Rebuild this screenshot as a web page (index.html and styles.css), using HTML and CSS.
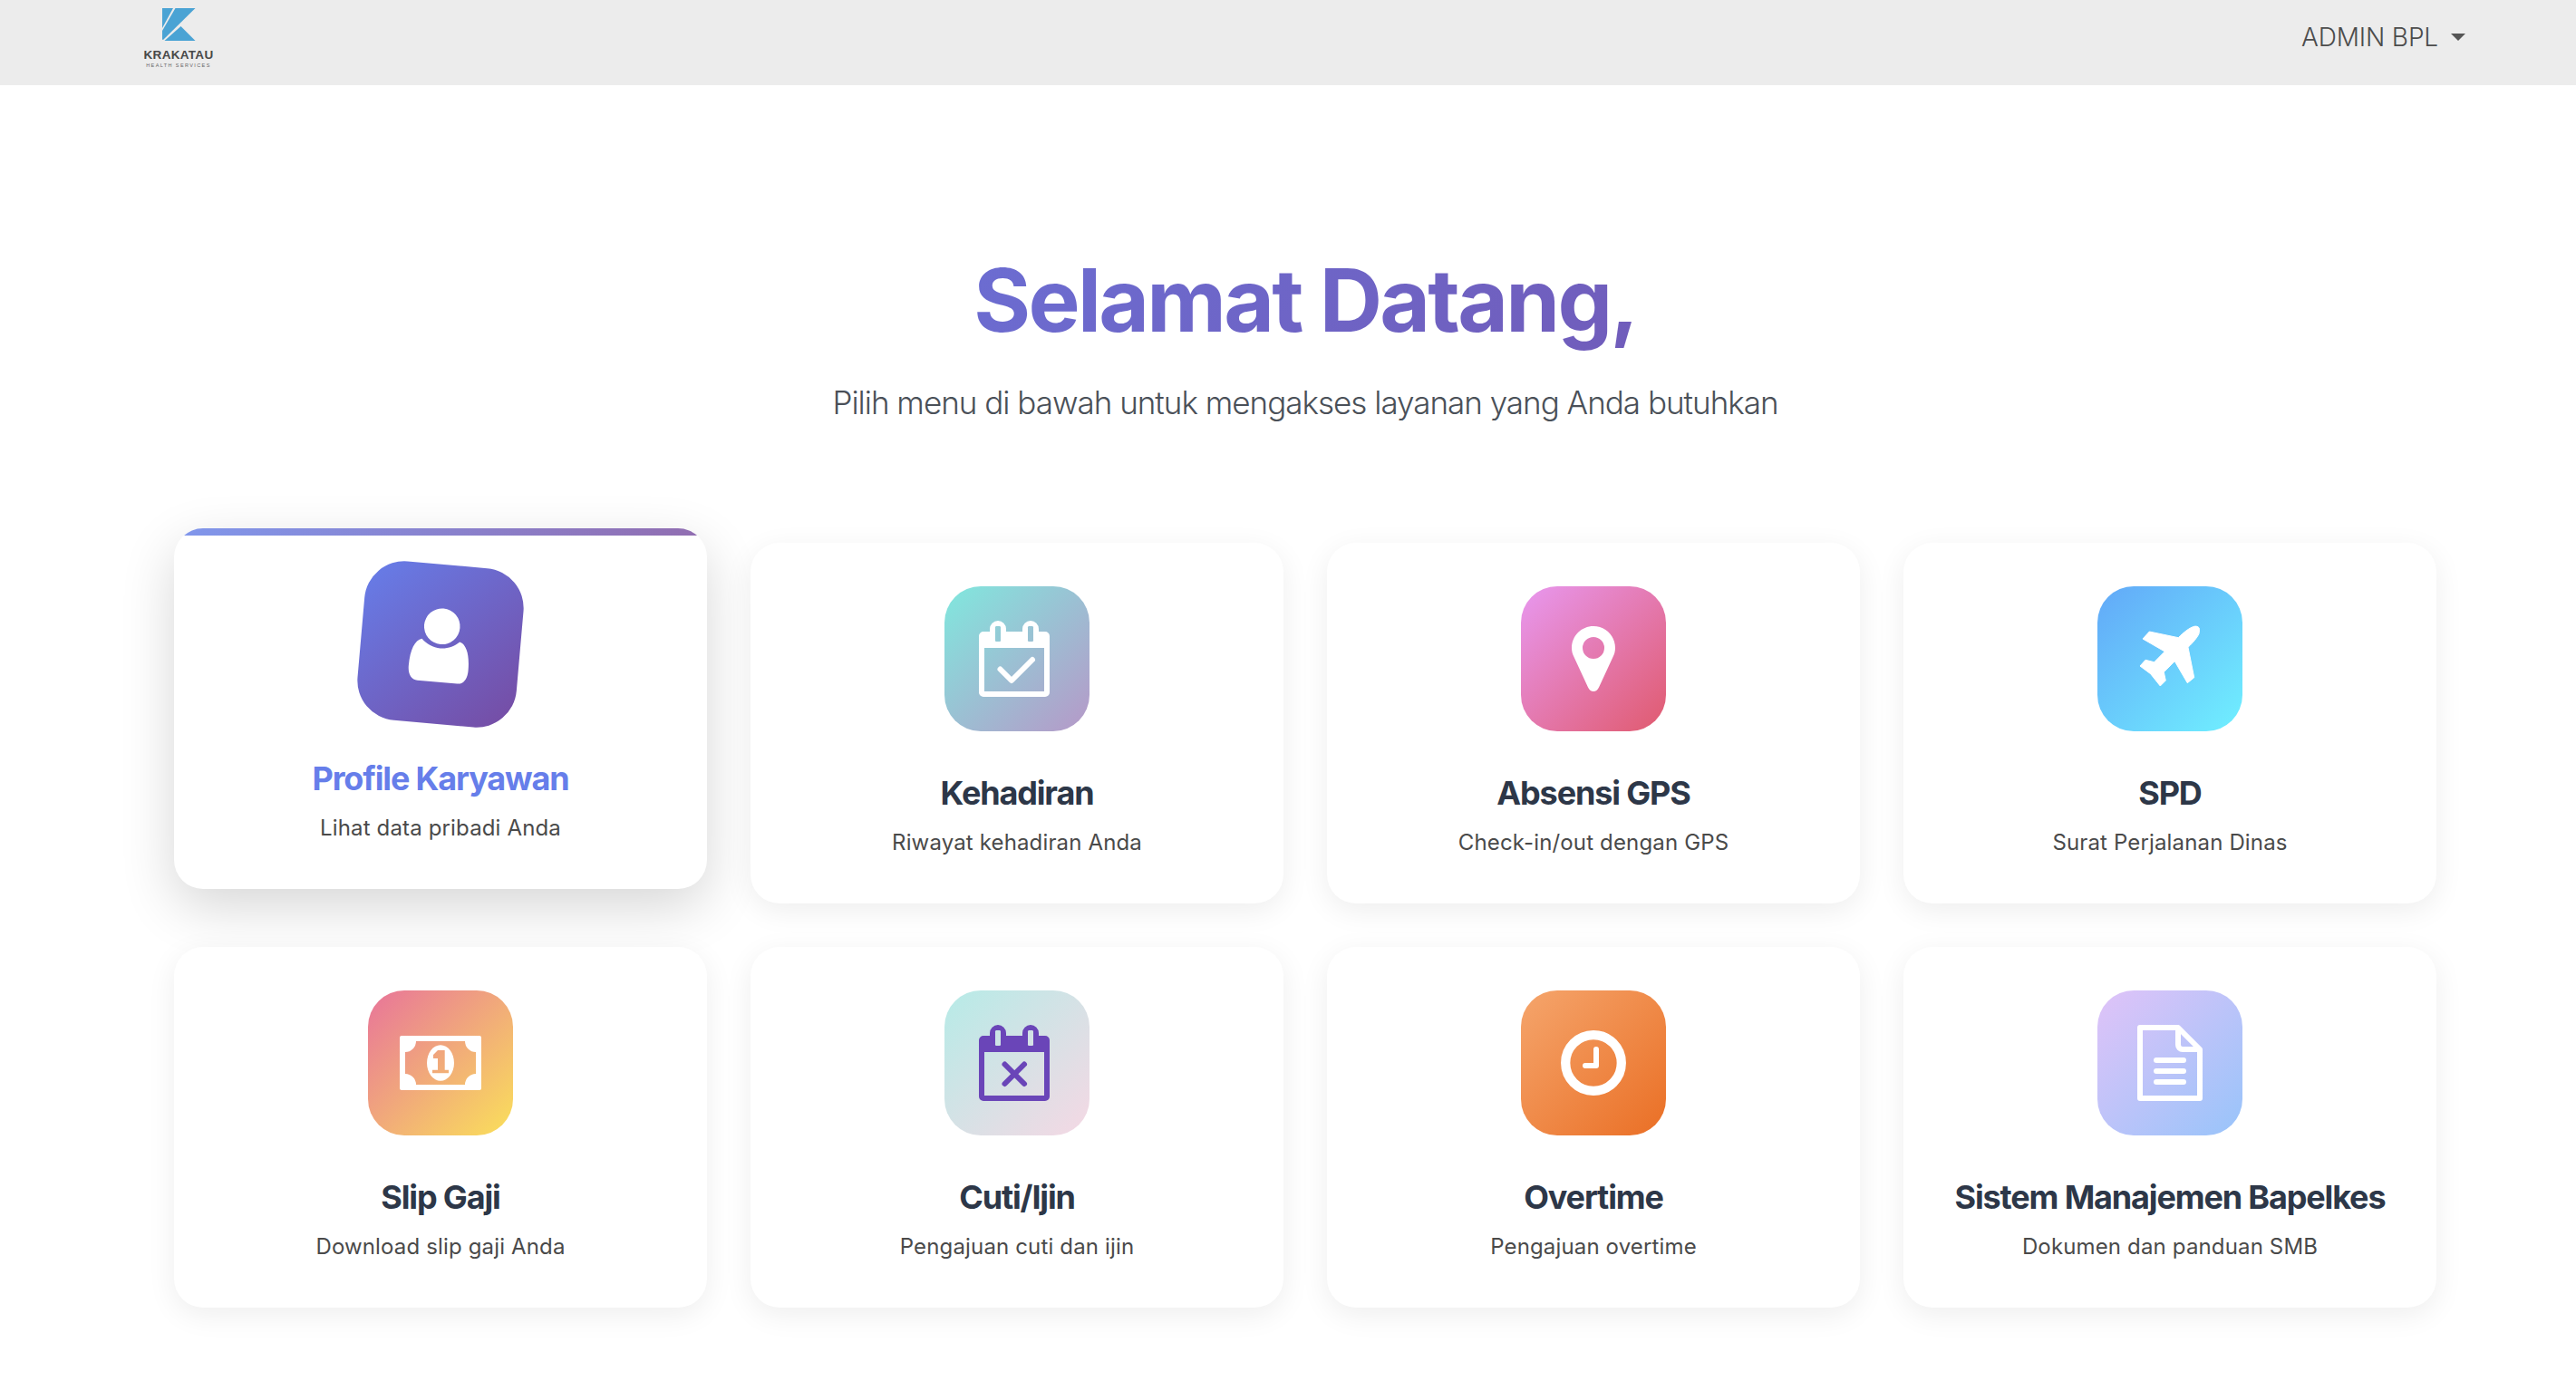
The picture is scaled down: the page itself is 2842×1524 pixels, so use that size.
FILE: index.html
```html
<!doctype html>
<html>
  <head>
    <meta name="viewport" content="width=device-width, initial-scale=1">
    <link rel="stylesheet" href="styles.css">
    <title>Krakatau Health Services</title>
  </head>
  <body>
    <nav class="navbar">
      <a class="brand" href="#">
        <svg class="brand-mark" viewBox="0 0 37 36">
          <polygon points="0,0 12,0 0,22"/>
          <polygon points="14.5,0 36.5,0 1,35 0,34.5 0,25"/>
          <polygon points="20.5,20 36.5,36 2.5,36"/>
        </svg>
        <span class="brand-name">KRAKATAU</span>
        <span class="brand-sub">HEALTH SERVICES</span>
      </a>
      <a class="user-menu" href="#">ADMIN BPL<span class="caret"></span></a>
    </nav>

    <main class="content">
      <header class="welcome">
        <h1>Selamat Datang,</h1>
        <p>Pilih menu di bawah untuk mengakses layanan yang Anda butuhkan</p>
      </header>

      <section class="menu-grid">
        <a class="menu-card active" href="#">
          <div class="menu-icon icon-profile">
            <svg viewBox="0 0 160 160">
              <circle class="solid" cx="80" cy="62" r="18"/>
              <path class="solid" d="M61 76C66 81 73 84 80 84C87 84 94 81 99 76C106 78 110 88 110 104C110 113 106 118 100 118L60 118C54 118 50 113 50 104C50 88 54 78 61 76Z"/>
            </svg>
          </div>
          <h3>Profile Karyawan</h3>
          <p>Lihat data pribadi Anda</p>
        </a>

        <a class="menu-card" href="#">
          <div class="menu-icon icon-attendance">
            <svg viewBox="0 0 160 160">
              <path class="solid" fill-rule="evenodd" d="M50 50V47A9 9 0 0 1 68 47V50H86V47A9 9 0 0 1 104 47V50H111A5 5 0 0 1 116 55V117A5 5 0 0 1 111 122H43A5 5 0 0 1 38 117V55A5 5 0 0 1 43 50ZM56 46V59A1.5 1.5 0 0 0 57.5 61H60.5A1.5 1.5 0 0 0 62 59V46A1.5 1.5 0 0 0 60.5 44H57.5A1.5 1.5 0 0 0 56 46ZM92 46V59A1.5 1.5 0 0 0 93.5 61H96.5A1.5 1.5 0 0 0 98 59V46A1.5 1.5 0 0 0 96.5 44H93.5A1.5 1.5 0 0 0 92 46ZM44 68V116H110V68Z"/>
              <polyline class="line" points="61.5,91.5 74,104 97,81"/>
            </svg>
          </div>
          <h3>Kehadiran</h3>
          <p>Riwayat kehadiran Anda</p>
        </a>

        <a class="menu-card" href="#">
          <div class="menu-icon icon-gps">
            <svg viewBox="0 0 160 160">
              <path class="solid" fill-rule="evenodd" d="M80 44C93.3 44 104 54.7 104 68C104 72 103 75 101.5 78L86 111.5C84.5 114.7 82.5 116 80 116C77.5 116 75.5 114.7 74 111.5L58.5 78C57 75 56 72 56 68C56 54.7 66.7 44 80 44ZM80 56A12 12 0 1 0 80 80A12 12 0 1 0 80 56Z"/>
            </svg>
          </div>
          <h3>Absensi GPS</h3>
          <p>Check-in/out dengan GPS</p>
        </a>

        <a class="menu-card" href="#">
          <div class="menu-icon icon-spd">
            <svg viewBox="0 0 160 160">
              <path class="solid plane" d="M89.3 56.7C95 51 101 46 106.7 44.3C109 43.7 111 44.5 112 45.7C112.8 47.5 112.5 50 112 52.3C110 57 105 62.5 100 67.3L106.7 100.7L99.3 106.7L85.3 82.7L73.3 94.7L75.3 104L69.3 110L58.7 96.7L47 88L53 81.3L62.7 83.7L74.3 72L50 58L57.3 50Z"/>
            </svg>
          </div>
          <h3>SPD</h3>
          <p>Surat Perjalanan Dinas</p>
        </a>

        <a class="menu-card" href="#">
          <div class="menu-icon icon-salary">
            <svg viewBox="0 0 160 160">
              <path class="solid" fill-rule="evenodd" d="M37 50H123A2 2 0 0 1 125 52V108A2 2 0 0 1 123 110H37A2 2 0 0 1 35 108V52A2 2 0 0 1 37 50ZM53 56A12 12 0 0 1 41 68V92A12 12 0 0 1 53 104H107A12 12 0 0 1 119 92V68A12 12 0 0 1 107 56ZM80 60.300A15 19.700 0 1 0 80 99.700A15 19.700 0 1 0 80 60.300ZM77 66H84.700V87.700H89V91.300H71V87.700H77V75H72V71Z"/>
            </svg>
          </div>
          <h3>Slip Gaji</h3>
          <p>Download slip gaji Anda</p>
        </a>

        <a class="menu-card" href="#">
          <div class="menu-icon icon-leave">
            <svg viewBox="0 0 160 160">
              <path class="solid" fill-rule="evenodd" d="M50 50V47A9 9 0 0 1 68 47V50H86V47A9 9 0 0 1 104 47V50H111A5 5 0 0 1 116 55V117A5 5 0 0 1 111 122H43A5 5 0 0 1 38 117V55A5 5 0 0 1 43 50ZM56 46V59A1.5 1.5 0 0 0 57.5 61H60.5A1.5 1.5 0 0 0 62 59V46A1.5 1.5 0 0 0 60.5 44H57.5A1.5 1.5 0 0 0 56 46ZM92 46V59A1.5 1.5 0 0 0 93.5 61H96.5A1.5 1.5 0 0 0 98 59V46A1.5 1.5 0 0 0 96.5 44H93.5A1.5 1.5 0 0 0 92 46ZM44 68V116H110V68Z"/>
              <polyline class="line" points="66.500,81.500 88,103"/>
              <polyline class="line" points="88,81.500 66.500,103"/>
            </svg>
          </div>
          <h3>Cuti/Ijin</h3>
          <p>Pengajuan cuti dan ijin</p>
        </a>

        <a class="menu-card" href="#">
          <div class="menu-icon icon-overtime">
            <svg viewBox="0 0 160 160">
              <circle class="ring" cx="80" cy="80" r="30.800"/>
              <polyline class="line" points="83,65 83,83 71,83"/>
            </svg>
          </div>
          <h3>Overtime</h3>
          <p>Pengajuan overtime</p>
        </a>

        <a class="menu-card" href="#">
          <div class="menu-icon icon-document">
            <svg viewBox="0 0 160 160">
              <path class="outline" d="M47 41H89L113 65V119H47ZM89 41V60A5 5 0 0 0 94 65H113"/>
              <polyline class="line" points="65,77 95,77"/>
              <polyline class="line" points="65,89 95,89"/>
              <polyline class="line" points="65,101 95,101"/>
            </svg>
          </div>
          <h3>Sistem Manajemen Bapelkes</h3>
          <p>Dokumen dan panduan SMB</p>
        </a>
      </section>
    </main>
  </body>
</html>
```

FILE: styles.css
```css
* {
  box-sizing: border-box;
}
body {
  margin: 0;
  background-color: #ffffff;
  font-family: Inter, "Noto Sans", sans-serif;
  color: #2d3748;
}
a {
  text-decoration: none;
  color: inherit;
}

/* navbar */
.navbar {
  height: 94px;
  padding: 9px 122px 0 158px;
  background-color: #ececec;
  display: flex;
  justify-content: space-between;
  align-items: flex-start;
}
.brand {
  width: 78px;
  display: flex;
  flex-direction: column;
  align-items: center;
  font-family: "Liberation Sans", Arial, sans-serif;
  line-height: 1;
  white-space: nowrap;
}
.brand-mark {
  width: 37px;
  height: 36px;
  fill: #4aa3d4;
}
.brand-name {
  margin-top: 9px;
  font-size: 13.5px;
  font-weight: bold;
  letter-spacing: 0.3px;
  color: #484848;
}
.brand-sub {
  margin-top: 2px;
  font-size: 5.5px;
  letter-spacing: 1.4px;
  color: #666666;
}
.user-menu {
  margin-top: 18px;
  display: flex;
  align-items: center;
  font-size: 28px;
  font-weight: 300;
  line-height: 28px;
  letter-spacing: -0.15px;
  color: #4c4c4c;
}
.caret {
  margin-left: 14px;
  border-top: 8px solid #555555;
  border-left: 8px solid transparent;
  border-right: 8px solid transparent;
}

/* welcome header */
.content {
  padding: 180px 154px 80px 192px;
}
.welcome {
  text-align: center;
  margin-bottom: 130px;
}
.welcome h1 {
  margin: 0;
  font-size: 96px;
  font-weight: 700;
  line-height: 1.2;
  letter-spacing: -2.7px;
  background: linear-gradient(135deg, #667eea, #764ba2);
  -webkit-background-clip: text;
  background-clip: text;
  color: transparent;
}
.welcome p {
  margin: 31px 0 0;
  font-size: 35px;
  font-weight: 300;
  line-height: 1.4;
  letter-spacing: -1px;
  color: #4a5058;
}

/* menu cards */
.menu-grid {
  display: grid;
  grid-template-columns: repeat(4, 588px);
  gap: 48px;
}
.menu-card {
  height: 398px;
  padding: 48px 24px 0;
  background-color: #ffffff;
  border-radius: 32px;
  box-shadow: 0 8px 32px rgba(0, 0, 0, 0.07);
  display: flex;
  flex-direction: column;
  align-items: center;
  text-align: center;
  overflow: hidden;
  position: relative;
}
.menu-card h3 {
  margin: 47px 0 0;
  font-size: 36px;
  font-weight: 700;
  line-height: 1.2;
  letter-spacing: -1.15px;
  color: #2d3748;
}
.menu-card p {
  margin: 15px 0 0;
  font-size: 24px;
  line-height: 1.5;
  letter-spacing: 0.15px;
  color: #4a4a4a;
}
.menu-card.active {
  transform: translateY(-16px);
  box-shadow: 0 20px 60px rgba(0, 0, 0, 0.16);
}
.menu-card.active::before {
  content: "";
  position: absolute;
  top: 0;
  left: 0;
  right: 0;
  height: 8px;
  background: linear-gradient(90deg, #8097ec, #916db0);
}
.menu-card.active h3 {
  color: #667eea;
}
.menu-card.active .menu-icon {
  transform: scale(1.1) rotate(5deg);
}

/* icon tiles */
.menu-icon {
  width: 160px;
  height: 160px;
  flex-shrink: 0;
  border-radius: 40px;
  color: #ffffff;
}
.menu-icon svg {
  display: block;
  width: 160px;
  height: 160px;
}
.solid {
  fill: currentColor;
}
.plane {
  stroke: currentColor;
  stroke-width: 1;
  stroke-linejoin: round;
}
.line {
  fill: none;
  stroke: currentColor;
  stroke-width: 6;
  stroke-linecap: round;
  stroke-linejoin: round;
}
.ring {
  fill: none;
  stroke: currentColor;
  stroke-width: 10.3;
}
.outline {
  fill: none;
  stroke: currentColor;
  stroke-width: 6;
  stroke-linejoin: round;
}
.icon-profile {
  background: linear-gradient(135deg, #667eea, #764ba2);
}
.icon-attendance {
  background: linear-gradient(135deg, #80e8de, #b698c8);
}
.icon-gps {
  background: linear-gradient(135deg, #e898f0, #e05a6e);
}
.icon-spd {
  background: linear-gradient(135deg, #62a8f8, #70f0ff);
}
.icon-salary {
  background: linear-gradient(135deg, #e8749a, #fae05a);
}
.icon-leave {
  background: linear-gradient(135deg, #b6ebe7, #f5d8e4);
  color: #6a45b8;
}
.icon-overtime {
  background: linear-gradient(135deg, #f5a56c, #ea6f25);
}
.icon-document {
  background: linear-gradient(135deg, #e0c3f8, #98c4fa);
}
```
